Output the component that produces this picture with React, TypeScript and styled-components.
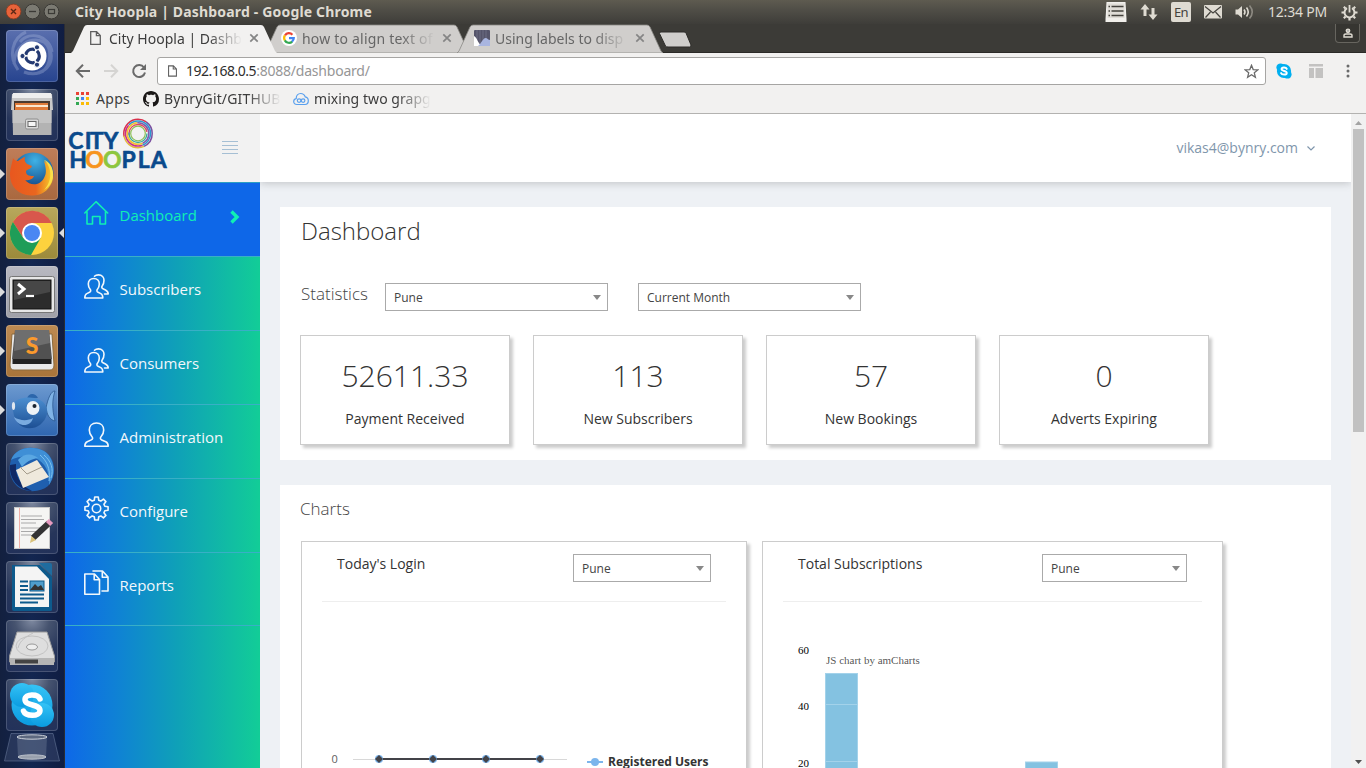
import React from "react";
import styled, { createGlobalStyle } from "styled-components";

const GlobalStyle = createGlobalStyle`
  * { box-sizing: border-box; }
  html, body { margin: 0; padding: 0; overflow: hidden; }
  body { font-family: "Open Sans", "Noto Sans", sans-serif; color: #333; }
  svg { display: block; flex: none; }
`;

const system = `"Noto Sans", "Open Sans", sans-serif`;

/* ---------- desktop shell ---------- */

const Desktop = styled.div`
  width: 1366px;
  height: 768px;
  display: flex;
  flex-direction: column;
  overflow: hidden;
`;

const MenuBar = styled.header`
  height: 24px;
  flex: none;
  display: flex;
  align-items: center;
  padding: 0 8px 0 6px;
  background: linear-gradient(#5e5b50 0%, #504e47 40%, #3e3d39 100%);
  font-family: ${system};
`;

const WindowTitle = styled.h1`
  margin: 0 auto 0 15px;
  font-size: 14px;
  line-height: 22px;
  font-weight: 700;
  letter-spacing: 0.17px;
  color: #dfdbd2;
  white-space: nowrap;
`;

const Indicators = styled.div`
  display: flex;
  align-items: center;
  gap: 13px;
`;

const Clock = styled.time`
  width: 60px;
  font-size: 14px;
  line-height: 22px;
  letter-spacing: -0.2px;
  color: #dfdbd2;
  white-space: nowrap;
`;

const LangBadge = styled.span`
  width: 20px;
  height: 20px;
  border-radius: 2px;
  background: #dfdbd2;
  color: #44423d;
  font-size: 13px;
  line-height: 21px;
  text-align: center;
  letter-spacing: -0.6px;
`;

const Workspace = styled.div`
  flex: 1;
  min-height: 0;
  display: flex;
`;

const Launcher = styled.nav`
  width: 65px;
  flex: none;
  padding: 6px 0 0 6px;
  display: flex;
  flex-direction: column;
  gap: 7px;
  border-right: 1px solid #2b2c33;
  background: linear-gradient(90deg, #13203f, #132650 50%, #101d42);
`;

const Tile = styled.div<{ $tint: string }>`
  position: relative;
  width: 52px;
  height: 52px;
  flex: none;
  border-radius: 4px;
  background: ${(p) => p.$tint};
  box-shadow: inset 0 0 0 1px rgba(255, 255, 255, 0.17);
`;

const Pip = styled.i<{ $side: "left" | "right" }>`
  position: absolute;
  top: 21px;
  ${(p) => (p.$side === "left" ? "left: -6px;" : "right: -6px;")}
  border: 5px solid transparent;
  ${(p) =>
    p.$side === "left"
      ? "border-left-color: #dcdcdc; border-right: 0;"
      : "border-right-color: #dcdcdc; border-left: 0;"}
`;

const Trash = styled.div`
  margin: -5px 0 0 -3px;
`;

/* ---------- browser ---------- */

const Browser = styled.div`
  flex: 1;
  min-width: 0;
  display: flex;
  flex-direction: column;
`;

const TabStrip = styled.div`
  height: 29px;
  flex: none;
  display: flex;
  padding: 0 6px;
  background: #3c3b37;
  box-shadow: inset 0 -1px #2b2a27;
  font-family: ${system};
`;

const TabBox = styled.div<{ $active?: boolean }>`
  position: relative;
  z-index: ${(p) => (p.$active ? 2 : 1)};
  width: 206px;
  height: 29px;
  flex: none;
  margin-right: -13px;
  padding: 0 18px 1px 17px;
  display: flex;
  align-items: center;
`;

const TabShape = styled.svg`
  position: absolute;
  left: 0;
  top: 0;
  z-index: -1;
`;

const FadeText = styled.span<{ $w: number; $ls?: number; $muted?: boolean; $solid?: boolean }>`
  width: ${(p) => p.$w}px;
  overflow: hidden;
  white-space: nowrap;
  font-family: ${system};
  font-size: 14px;
  letter-spacing: ${(p) => p.$ls ?? 0}px;
  color: ${(p) => (p.$muted ? "#666" : "#3c3c3c")};
  ${(p) => (p.$solid ? "" : "mask-image: linear-gradient(90deg, #000 calc(100% - 34px), transparent);")}
`;

const TabIcon = styled.span<{ $active?: boolean }>`
  width: 16px;
  margin-right: 5px;
  display: flex;
  justify-content: center;
`;

const TabClose = styled.span`
  margin-left: 7px;
`;

const Profile = styled.div`
  width: 25px;
  height: 19px;
  margin-left: auto;
  display: flex;
  align-items: center;
  justify-content: center;
  border: 1px solid #67655f;
  border-top: 0;
  border-radius: 0 0 4px 4px;
  background: #363531;
`;

const NewTab = styled.div`
  margin: 7px 0 0 8px;
`;

const Toolbar = styled.div`
  height: 32px;
  flex: none;
  display: flex;
  align-items: center;
  padding: 4px 16px 0 10px;
  background: #f2f1f0;
`;

const NavIcons = styled.div`
  width: 82px;
  display: flex;
  gap: 12px;
`;

const AddressBar = styled.div`
  width: 1109px;
  height: 28px;
  flex: none;
  display: flex;
  align-items: center;
  padding: 0 6px 0 10px;
  border: 1px solid #a6a5a3;
  border-radius: 3px;
  background: #fff;
  font-family: ${system};
  font-size: 14px;
  line-height: 20px;
  letter-spacing: -0.47px;
  color: #2e2e2e;
`;

const Url = styled.span`
  margin: 0 auto 0 9px;
  span { color: #969696; letter-spacing: -0.22px; }
`;

const Extensions = styled.div`
  margin-left: 9px;
  flex: 1;
  display: flex;
  align-items: center;
  gap: 16px;
  svg:last-child { margin-left: auto; }
`;

const Bookmarks = styled.div`
  height: 29px;
  flex: none;
  display: flex;
  align-items: center;
  padding: 0 0 1px 11px;
  border-bottom: 1px solid #b3b2b0;
  background: #f2f1f0;
  font-family: ${system};
`;

const Bookmark = styled.div<{ $gap: number; $after: number }>`
  display: flex;
  align-items: center;
  gap: ${(p) => p.$gap}px;
  margin-right: ${(p) => p.$after}px;
`;

const Viewport = styled.div`
  flex: 1;
  min-height: 0;
  display: flex;
`;

const ScrollTrack = styled.div`
  width: 15px;
  flex: none;
  display: flex;
  flex-direction: column;
  align-items: center;
  background: #f1f1f1;
`;

const ScrollButton = styled.div`
  height: 15px;
  display: flex;
  align-items: center;
  padding-top: 2px;
`;

const ScrollThumb = styled.div`
  width: 11px;
  height: 303px;
  margin-bottom: auto;
  background: #c1c1c1;
`;

/* ---------- app sidebar ---------- */

const Sidebar = styled.aside`
  width: 195px;
  flex: none;
  display: flex;
  flex-direction: column;
`;

const Brand = styled.div`
  height: 68px;
  flex: none;
  display: flex;
  align-items: flex-start;
  background: #f2f2f2;
`;

const Burger = styled.div`
  width: 16px;
  margin: 27px 0 0 52px;
  display: flex;
  flex-direction: column;
  gap: 3px;
  i { height: 1px; background: #a5bfd4; }
`;

const Menu = styled.ul`
  flex: 1;
  margin: 0;
  padding: 0;
  list-style: none;
  border-top: 1px solid #2b9fc4;
  background: linear-gradient(90deg, #0e68e8 0%, #0f80d6 25%, #0fa0b8 57%, #12cd97 100%);
`;

const MenuItem = styled.li<{ $active?: boolean }>`
  height: 74px;
  padding: 17px 20px 0 19px;
  display: flex;
  align-items: flex-start;
  border-bottom: 1px solid #39afc6;
  background: ${(p) => (p.$active ? "#0e67e8" : "none")};
  color: ${(p) => (p.$active ? "#10efb4" : "#f2f7fb")};
  font-size: 15px;
  line-height: 20px;
  &:last-child { height: 73px; }
`;

const MenuLabel = styled.span`
  margin: 5px auto 0 10.5px;
`;

const ChevronSlot = styled.span`
  margin-top: 10px;
`;

/* ---------- main area ---------- */

const Main = styled.main`
  flex: 1;
  min-width: 0;
  display: flex;
  flex-direction: column;
  background: #eef1f5;
`;

const TopBar = styled.div`
  height: 68px;
  flex: none;
  display: flex;
  align-items: center;
  justify-content: flex-end;
  gap: 9px;
  padding: 0 36px 2px 0;
  background: #fff;
  box-shadow: 0 1px 8px rgba(50, 50, 50, 0.25);
  clip-path: inset(0 0 -12px 0);
  color: #7f96ac;
  font-size: 14px;
  svg { margin-top: 2px; }
`;

const Panel = styled.section<{ $h: number }>`
  width: 1051px;
  height: ${(p) => p.$h}px;
  flex: none;
  margin: 25px 0 0 20px;
  padding-left: 20px;
  background: #fff;
`;

const PageTitle = styled.h2`
  margin: 0 0 0 1px;
  padding-top: 7px;
  font-size: 24px;
  line-height: 33px;
  font-weight: 300;
  color: #333;
`;

const SectionTitle = styled.h3<{ $w?: number; $top?: number }>`
  margin: 0;
  padding-top: ${(p) => p.$top ?? 0}px;
  ${(p) => (p.$w ? `width: ${p.$w}px;` : "")}
  font-size: 17px;
  line-height: 24px;
  font-weight: 300;
  color: #444;
`;

const Filters = styled.div`
  height: 28px;
  margin: 36px 0 24px 1px;
  display: flex;
  align-items: center;
  gap: 30px;
  ${SectionTitle} { margin: -7px -30px 0 0; }
`;

const SelectBox = styled.div<{ $w: number }>`
  width: ${(p) => p.$w}px;
  height: 28px;
  flex: none;
  display: flex;
  align-items: center;
  justify-content: space-between;
  padding: 0 6px 0 8px;
  border: 1px solid #aaa;
  background: #fff;
  color: #444;
  font-size: 12px;
  line-height: normal;
  &::after {
    content: "";
    border: 4px solid transparent;
    border-top: 5px solid #888;
    border-bottom: 0;
  }
`;

const Stats = styled.div`
  display: flex;
  gap: 23px;
`;

const StatCard = styled.div`
  width: 210px;
  height: 110px;
  display: flex;
  flex-direction: column;
  align-items: center;
  border: 1px solid #ccc;
  box-shadow: 3px 3px 3px #ccc;
  background: #fff;
`;

const StatValue = styled.div`
  margin-top: 19px;
  font-size: 30px;
  line-height: 41px;
  font-weight: 300;
  color: #333;
`;

const StatLabel = styled.div`
  margin-top: 13px;
  font-size: 14px;
  line-height: 20px;
  color: #333;
`;

const Charts = styled.div`
  margin: 20px 0 0 1px;
  display: flex;
  gap: 15px;
`;

const ChartCard = styled.div<{ $w: number }>`
  width: ${(p) => p.$w}px;
  height: 330px;
  padding: 0 20px;
  border: 1px solid #ccc;
  box-shadow: 3px 3px 3px #ccc;
  background: #fff;
`;

const ChartHead = styled.div`
  height: 60px;
  padding: 12px 15px 0 15px;
  display: flex;
  align-items: flex-start;
  justify-content: space-between;
  border-bottom: 1px solid #eee;
  font-size: 14px;
  line-height: 20px;
  color: #333;
`;

/* ---------- drawings ---------- */

const PageIcon = ({ w = 11, h = 14 }: { w?: number; h?: number }) => (
  <svg width={w} height={h} viewBox="0 0 11 14" fill="none" stroke="#5f5f5f" strokeWidth="1.3">
    <path d="M.7.7H6.6L10.3 4.4V13.3H.7ZM6.4.9V4.6H10.1" />
  </svg>
);

const GoogleIcon = () => (
  <svg width="16" height="16" viewBox="0 0 16 16" fill="none" strokeWidth="2.2">
    <circle cx="8" cy="8" r="8" fill="#fff" />
    <path d="M4 5.3A4.7 4.7 0 0 1 11.4 4.7" stroke="#ea4335" />
    <path d="M3.9 10.5A4.8 4.8 0 0 1 3.9 5.4" stroke="#fbbc05" />
    <path d="M11.2 11.6A4.8 4.8 0 0 1 3.8 10.4" stroke="#34a853" />
    <path d="M8 8.1H12.8A4.7 4.7 0 0 1 11 11.7" stroke="#4285f4" />
  </svg>
);

const ChartFavicon = () => (
  <svg width="16" height="16" viewBox="0 0 16 16">
    <rect width="16" height="16" rx="1" fill="#55546a" />
    <path d="M3 0V16M6 0V16M9 0V16M12 0V16" stroke="#6d6c82" />
    <path d="M0 6C3 7 4 14 8 16H0Z" fill="#fff" />
    <path d="M4 16C7 14 9 8 11.5 8C13.5 8 14 10 16 10V16Z" fill="#a9b5e0" />
  </svg>
);

const Cross = () => (
  <svg width="10" height="10" viewBox="0 0 10 10" stroke="#858585" strokeWidth="1.7">
    <path d="M1.3 1.3L8.7 8.7M8.7 1.3L1.3 8.7" />
  </svg>
);

const Arrow = ({ color, flip }: { color: string; flip?: boolean }) => (
  <svg width="16" height="16" viewBox="0 0 16 16" fill="none" stroke={color} strokeWidth="2">
    <path d={flip ? "M1 8H14M8 1.8L14.2 8L8 14.2" : "M15 8H2M8 1.8L1.8 8L8 14.2"} />
  </svg>
);

const Reload = () => (
  <svg width="16" height="16" viewBox="0 0 16 16">
    <path d="M13 4.5A6 6 0 1 0 14 9.5" fill="none" stroke="#6a6a6a" strokeWidth="2" />
    <path d="M15 1V7H9Z" fill="#6a6a6a" />
  </svg>
);

const Github = () => (
  <svg width="16" height="16" viewBox="0 0 16 16" fill="#1b1817">
    <path d="M8 0C3.580 0 0 3.580 0 8c0 3.540 2.290 6.530 5.470 7.590.4.070.550-.170.550-.380 0-.190-.010-.820-.010-1.490-2.010.370-2.530-.490-2.690-.940-.090-.230-.480-.940-.820-1.130-.280-.150-.680-.520-.010-.530.630-.010 1.080.580 1.230.820.720 1.210 1.870.870 2.330.660.070-.520.280-.870.510-1.070-1.780-.2-3.640-.890-3.640-3.950 0-.870.310-1.590.820-2.150-.080-.2-.360-1.020.080-2.120 0 0 .670-.210 2.200.820.640-.180 1.320-.270 2-.270s1.360.090 2 .270c1.530-1.040 2.200-.820 2.200-.820.440 1.100.160 1.920.080 2.120.510.560.820 1.270.820 2.150 0 3.070-1.870 3.750-3.650 3.950.290.250.540.730.540 1.480 0 1.070-.010 1.930-.010 2.200 0 .210.150.460.550.380A8.010 8.010 0 0 0 16 8c0-4.420-3.580-8-8-8Z" />
  </svg>
);

const CloudMark = () => (
  <svg width="16" height="14" viewBox="0 0 16 14" fill="none" stroke="#5aa0ee" strokeWidth="1.2">
    <path d="M4 12.500C1.700 12.500.700 11 .700 9.500C.700 8 1.800 6.800 3.200 6.600C3.200 3.500 5 1.500 7.700 1.500C10 1.500 11.500 2.800 12.200 4.800C14.200 5.200 15.300 6.700 15.300 8.800C15.300 11 14 12.500 12 12.500Z" />
    <circle cx="6.1" cy="8.6" r="1.8" />
    <circle cx="10.1" cy="8.6" r="1.8" />
  </svg>
);

const appsColors = ["#ea4335", "#ea4335", "#ea4335", "#34a853", "#4285f4", "#fbbc05", "#34a853", "#fbbc05", "#fbbc05"];
const AppsGrid = () => (
  <svg width="13" height="13" viewBox="0 0 13 13">
    {appsColors.map((c, i) => (
      <rect key={i} x={(i % 3) * 5} y={Math.floor(i / 3) * 5} width="3" height="3" fill={c} />
    ))}
  </svg>
);

const SkypeBlob = ({ size, light }: { size: number; light?: boolean }) => (
  <svg width={size} height={size} viewBox="0 0 52 52">
    <defs>
      <linearGradient id="sky" x2="0" y2="1">
        <stop stopColor="#35c3f6" />
        <stop offset="1" stopColor="#0a9be0" />
      </linearGradient>
    </defs>
    <g fill={light ? "#00aff0" : "url(#sky)"}>
      <circle cx="26" cy="26" r="20.5" />
      <circle cx="16" cy="16" r="12" />
      <circle cx="36" cy="36" r="12" />
      <path
        d="M34 20C32 14.500 19 14.500 19 20.500C19 27.500 34 24.500 34 31.500C34 38 19.500 37.500 17.500 32"
        fill="none"
        stroke="#fff"
        strokeWidth="5.5"
        strokeLinecap="round"
      />
    </g>
  </svg>
);

const WindowButtons = () => (
  <svg width="54" height="18" viewBox="0 0 54 18" fill="none">
    <circle cx="7.5" cy="8.5" r="7.4" fill="#e8633a" stroke="#8f3b20" strokeWidth=".8" />
    <path d="M5 6L10 11M10 6L5 11" stroke="#5c2815" strokeWidth="1.4" />
    <circle cx="26.5" cy="8.500" r="7.4" fill="#7b7a72" stroke="#3a3935" />
    <path d="M23 8.500H30" stroke="#3b3a36" strokeWidth="1.3" />
    <circle cx="45.5" cy="8.5" r="7.4" fill="#7b7a72" stroke="#3a3935" />
    <rect x="42.5" y="6.5" width="6" height="4" stroke="#3b3a36" strokeWidth="1.2" />
  </svg>
);

const ListIndicator = () => (
  <svg width="22" height="20" viewBox="0 0 22 20">
    <path d="M1.5 0H20.5L21.5 17V20H.5V17Z" fill="#f1efeb" />
    <path d="M2.5 1.5H19.5V16H2.5Z" fill="#dfdcd6" />
    <path d="M6.500 4.500H18.500M6.500 9H18.500M6.500 13.500H18.500" stroke="#44423d" strokeWidth="1.3" />
    <path d="M3.500 4.500H5M3.500 9H5M3.500 13.500H5" stroke="#44423d" strokeWidth="1.3" />
  </svg>
);

const NetworkIndicator = () => (
  <svg width="18" height="18" viewBox="0 0 18 18" fill="#dfdbd2">
    <path d="M5 1L9.500 6.500H6.500V13H3.500V6.500H.500ZM13 17L8.500 11.500H11.500V5H14.500V11.500H17.500Z" />
  </svg>
);

const MailIndicator = () => (
  <svg width="18" height="14" viewBox="0 0 18 14">
    <rect width="18" height="13.5" rx="1" fill="#dfdbd2" />
    <path d="M1 1.500L9 8L17 1.500M1.500 12.500L6.500 7M16.500 12.500L11.500 7" fill="none" stroke="#44423d" strokeWidth="1.2" />
  </svg>
);

const VolumeIndicator = () => (
  <svg width="20" height="16" viewBox="0 0 20 16" fill="none">
    <path d="M.5 5.500H3L7 2V14L3 10.500H.5Z" fill="#dfdbd2" />
    <path d="M9 5.500Q11 8 9 10.500M11.500 3.500Q15 8 11.500 12.500" stroke="#dfdbd2" strokeWidth="1.6" />
    <path d="M14.500 1.500Q20 8 14.500 14.500" stroke="#8d8a82" strokeWidth="1.6" />
  </svg>
);

const PowerGear = () => (
  <svg width="17" height="17" viewBox="0 0 17 17" fill="none" stroke="#dfdbd2">
    <path d="M6 4.100A5 5 0 1 0 11 4.100" strokeWidth="2" />
    <path d="M8.500 1V8.500" strokeWidth="1.8" />
    <path d="M.5 8.500H3M14 8.500H16.500M8.500 14V16.500M2.800 2.800L4.500 4.500M14.200 2.800L12.500 4.500M2.800 14.200L4.500 12.500M14.200 14.200L12.500 12.500" strokeWidth="2.2" />
  </svg>
);

const rings: [number, string, number, string, number][] = [
  [14.2, "#d9304a", 1.5, "34 55.2", 48],
  [14.2, "#7a4fa0", 1.5, "30 59.2", 14],
  [14.2, "#e2b93a", 1.5, "26 63.2", -16],
  [12.5, "#2f97cf", 1.6, "45 33.5", 30],
  [12.5, "#c9308c", 1.6, "33 45.5", -15],
  [10.8, "#f2c230", 1.6, "38 29.9", -12],
  [10.8, "#7f5cb0", 1.6, "30 37.9", 18],
  [9, "#e0485c", 1.3, "28 28.5", 30],
  [9, "#35aa9c", 1.3, "29 27.5", 0],
  [7.3, "#8cc05a", 1.2, "none", 0],
];

const Logo = () => (
  <svg width="105" height="60" viewBox="0 0 105 60">
    <g fill="none">
      {rings.map(([r, stroke, w, dash, off], i) => (
        <circle key={i} cx="73" cy="19.5" r={r} stroke={stroke} strokeWidth={w} strokeDasharray={dash} strokeDashoffset={off} />
      ))}
    </g>
    <g fontFamily="Lato, sans-serif" fontWeight="700" fontSize="23" fill="#0a4a8c" stroke="#0a4a8c" strokeWidth=".6" strokeLinejoin="round">
      <text y="34.7" x="3.3 19.8 24.8 38.6">CITY</text>
      <text y="54.2" x="4.3 20.2 38 56.5 72.8 85.7">
        H<tspan fill="#f7941d" stroke="#f7941d">O</tspan><tspan fill="#8dc63f" stroke="#8dc63f">O</tspan>PLA
      </text>
    </g>
  </svg>
);

const LineIcon = styled.svg.attrs({ width: 25, height: 26, viewBox: "0 0 25 26" })`
  fill: none;
  stroke: currentColor;
  stroke-width: 1.6;
  stroke-linejoin: round;
  stroke-linecap: round;
`;

const HomeIcon = () => (
  <LineIcon>
    <path d="M.8 13L12 1.700L23.700 13M3 11.500V24H8.500V16.500H16V24H21.500V11.500" />
  </LineIcon>
);
const UsersIcon = () => (
  <LineIcon>
    <path d="M9.800 4.500C6.300 4.500 4.300 7 4.300 10C4.300 12.800 5.300 14.300 6.300 15.500C7 16.600 6.800 17.700 5.500 18.300L2.800 19.600C1.200 20.400.800 21.400.800 24H18.800C18.800 21.400 18.400 20.400 16.800 19.600L14.100 18.300C12.800 17.700 12.600 16.600 13.300 15.500C14.300 14.300 15.300 12.800 15.300 10C15.300 7 13.300 4.500 9.800 4.500Z" />
    <path d="M10.500 2.200C11.500 1.200 13 .900 14.500.900C18 .900 20 3.300 20 6.300C20 9.200 19.200 10.700 18.200 12C17.500 13 17.700 14.200 19 14.800L21.500 16C23.500 17 24.200 18 24.200 20H20.500" />
  </LineIcon>
);
const UserIcon = () => (
  <LineIcon>
    <path d="M12.500 1C8 1 5.300 4 5.300 8C5.300 11.500 6.500 13.200 8 14.800C9 16 8.800 17.200 7.300 17.900L3.200 19.800C1.300 20.700.800 21.600.800 24.200H24.200C24.200 21.600 23.700 20.700 21.800 19.800L17.700 17.900C16.200 17.200 16 16 17 14.800C18.500 13.200 19.700 11.500 19.700 8C19.700 4 17 1 12.500 1Z" />
  </LineIcon>
);
const gearPath = (() => {
  const pts: string[] = [];
  for (let i = 0; i < 8; i++) {
    const mid = (i * Math.PI) / 4;
    [[-0.26, 8.6], [-0.15, 11.7], [0.15, 11.7], [0.26, 8.6]].forEach(([da, r]) => {
      pts.push(`${(12.5 + r * Math.sin(mid + da)).toFixed(2)} ${(12.5 - r * Math.cos(mid + da)).toFixed(2)}`);
    });
  }
  return `M${pts.join("L")}Z`;
})();
const GearIcon = () => (
  <LineIcon>
    <path d={gearPath} />
    <circle cx="12.5" cy="12.5" r="4.2" />
  </LineIcon>
);
const DocsIcon = () => (
  <LineIcon>
    <path d="M.8 4H10.500L15.500 9.500V24.300H.8ZM10.200 4.200V9.800H15.300" />
    <path d="M9 1H18.500L24 7V21H18M18.300 1.200V7.200H23.800" />
  </LineIcon>
);
const ActiveChevron = () => (
  <svg width="10" height="14" viewBox="0 0 10 14" fill="none" stroke="currentColor" strokeWidth="3.4">
    <path d="M1.500 1.500L7 7L1.500 12.500" />
  </svg>
);

/* launcher artwork, each on a 52px grid */
const Art = styled.svg.attrs({ width: 52, height: 52, viewBox: "0 0 52 52" })``;

const UbuntuArt = () => (
  <Art fill="none">
    <path d="M8 34C8 16 24 6 38 12C46 18 46 34 36 42M44 20C50 36 34 48 18 42M20 2C6 8 2 26 12 40M14 12C24 0 44 6 46 22" stroke="#a9b7dc" strokeOpacity=".35" strokeWidth="3" />
    <circle cx="26" cy="26" r="14.5" fill="#fff" />
    <circle cx="26.5" cy="26" r="6.8" stroke="#243a72" strokeWidth="3.2" strokeDasharray="12.2 2" strokeDashoffset="6" />
    <g fill="#243a72" stroke="#fff">
      <circle cx="16.5" cy="26" r="2.6" />
      <circle cx="31" cy="17.3" r="2.6" />
      <circle cx="31" cy="34.7" r="2.6" />
    </g>
  </Art>
);
const FilesArt = () => (
  <Art>
    <path d="M6 5H46L47 21H5Z" fill="#c9c9c9" />
    <path d="M7 4H45L46 9H6Z" fill="#eee" />
    <rect x="8" y="12" width="36" height="10" fill="#4b3a30" />
    <path d="M9 14H42V21H9Z" fill="#e07b3a" />
    <path d="M10 17H42" stroke="#fbe6cf" strokeWidth="2" />
    <path d="M6.500 21H45.500V46H7Z" fill="#b3b3b3" />
    <path d="M6.500 21H45.500V34H6.500Z" fill="#c4c4c4" />
    <rect x="19.5" y="30" width="13" height="10" rx="1.5" fill="#d9d9d9" stroke="#8e8e8e" />
    <rect x="22" y="32.5" width="8" height="5" fill="#f5f5f5" stroke="#666" />
  </Art>
);
const FirefoxArt = () => (
  <Art>
    <defs>
      <radialGradient id="ffb" cx=".55" cy=".2" r=".7">
        <stop stopColor="#3fb2e6" />
        <stop offset="1" stopColor="#12407f" />
      </radialGradient>
      <linearGradient id="ffo" x1="0" x2="1">
        <stop stopColor="#e8571f" />
        <stop offset=".6" stopColor="#e9661f" />
        <stop offset="1" stopColor="#f8d02c" />
      </linearGradient>
    </defs>
    <circle cx="27" cy="25" r="20.5" fill="url(#ffb)" />
    <path d="M7 10C8 12 10 13 12 13C15 11 18 9 19 9C18 12 19 14 21 16L26 18C25 21 22 21 20 23C20 27 22 28 28 28C27 32 20 33 19 32C24 38 34 38 38 30C41 25 40 20 38 13C46 18 49 26 46 34C42 44 34 48 25 47.500C12 47 4 38 4 27C4 20 6 16 7 10Z" fill="url(#ffo)" />
    <path d="M38 12C47 20 46 34 38 42C46 38 49 28 46 20C45 17 42 13 38 12Z" fill="#fbe04a" />
  </Art>
);
const ChromeArt = () => (
  <Art>
    <circle cx="26" cy="26" r="22" fill="#fdd23e" />
    <path d="M17.300 21L26 16H45.800A22 22 0 0 0 6.900 15L17.300 31Z" fill="#d8574c" />
    <path d="M6.900 15L17.300 31L26 36L34.700 31L25 48A22 22 0 0 1 6.900 15Z" fill="#1f9d58" />
    <circle cx="26" cy="26" r="10" fill="#fff" />
    <circle cx="26" cy="26" r="8" fill="#4a87f3" />
  </Art>
);
const TerminalArt = () => (
  <Art fill="none">
    <rect x="3.5" y="10.5" width="45" height="36" rx="2" fill="#e7e7e7" stroke="#777" />
    <rect x="7" y="14" width="38" height="29" fill="#2c2c2c" stroke="#111" />
    <path d="M8 15H44V26L8 34Z" fill="#474747" />
    <path d="M12 18L18 23L12 28" stroke="#fff" strokeWidth="3" />
    <path d="M20 30H28" stroke="#fff" strokeWidth="2.2" />
  </Art>
);
const SublimeArt = () => (
  <Art>
    <path d="M6 9L4 40Q4 45 8 45H44Q48 45 48 40L46 9Z" fill="#e9e9e9" stroke="#8b6a3d" />
    <path d="M6.500 34H45.500V39H6.500Z" fill="#222" />
    <path d="M9 5H43L46 34H6Z" fill="#515151" />
    <path d="M9 5H43L44 18L8 26Z" fill="#6e6e6e" />
    <text x="26" y="28.5" textAnchor="middle" fontFamily="Lato, sans-serif" fontWeight="900" fontSize="23" fill="#fb9a2c">S</text>
  </Art>
);
const FishArt = () => (
  <Art>
    <defs>
      <linearGradient id="fish" x2="0" y2="1">
        <stop stopColor="#4b8ed0" />
        <stop offset="1" stopColor="#1d4f94" />
      </linearGradient>
    </defs>
    <path d="M40 24C42 14 45 7 49 7C46 16 46 25 49 37C44 36 41 31 40 24Z" fill="#7fb3e6" stroke="#234f86" strokeWidth=".7" />
    <path d="M21 15C22 9 29 8 32 14Z" fill="#2c66ab" />
    <path d="M7 20C10 14 24 11 34 16C40 19 42 25 41 30C38 42 26 47 17 43C10 40 6 30 7 20Z" fill="url(#fish)" />
    <path d="M8 33C14 37 22 37 27 34C25 43 12 44 8 33Z" fill="#7aabe0" />
    <ellipse cx="27" cy="24" rx="6.5" ry="7" fill="#eef2f6" />
    <circle cx="28.500" cy="22" r="2" fill="#1a2430" />
    <ellipse cx="7.500" cy="22" rx="1.600" ry="4" fill="#dfe6ee" />
  </Art>
);
const ThunderbirdArt = () => (
  <Art>
    <path d="M5 17C10 4 26 2 38 8C49 14 52 32 42 43C34 50 18 50 10 42C4 36 2 26 5 17Z" fill="#1f5fae" />
    <path d="M5 17C10 4 26 2 38 8C48 14 51 30 43 42C44 30 40 20 28 14C20 12 10 14 5 17Z" fill="#3f8fd6" />
    <path d="M34 12C40 17 45 25 43 38M38 12C45 18 48 26 45 35" stroke="#7cc0ee" strokeWidth="1" fill="none" />
    <path d="M4 22C3 36 12 47 26 48C14 42 9 33 10 21Z" fill="#102a66" />
    <path d="M10 27L31 17L43 34L17 45Z" fill="#efe9dc" />
    <path d="M14 24L21 31L36 24" fill="none" stroke="#a39b8b" />
    <path d="M12 17C18 10 26 10 32 15C25 16 20 19 16 24Z" fill="#5aa7e2" />
  </Art>
);
const GeditArt = () => (
  <Art fill="none">
    <rect x="8.500" y="5.500" width="35" height="41" fill="#f5f5f3" stroke="#c8c8c8" />
    <path d="M13.500 6V46" stroke="#f0b0a8" />
    <path d="M15 14H36M15 17.500H38M15 21H30M15 26H37M15 29.500H30M15 33H25" stroke="#a9a9a9" strokeWidth="1.2" />
    <path d="M27 36L43 21" stroke="#333" strokeWidth="6" />
    <path d="M42 22L45 19" stroke="#e79ac0" strokeWidth="6" />
    <path d="M24 41L25.500 34L30 38Z" fill="#d9c27a" />
  </Art>
);
const WriterArt = () => (
  <Art>
    <path d="M6 4H34L46 16V49Q46 50 44 50H8Q6 50 6 48Z" fill="#0d5a8c" />
    <path d="M33 2H44Q46 2 46 4V15Z" fill="#1f6c9f" />
    <path d="M9 5.500H31L43 18V46H9Z" fill="#f4f4f4" />
    <path d="M14 20.500H22M14 25H22M14 29H22M14 33.500H38M14 37.500H38M14 41.500H32" stroke="#0d5a8c" strokeWidth="1.8" />
    <rect x="24" y="20" width="14" height="10" fill="#4f9dcb" stroke="#0d5a8c" />
    <path d="M24 29L29 23L32 26L35 24L38 29Z" fill="#333" />
  </Art>
);
const DiskArt = () => (
  <Art fill="none">
    <path d="M11 12H41L48.500 36V42H3.500V36Z" fill="#dedede" stroke="#9a9a9a" />
    <path d="M4 38H48V45H4Z" fill="#b5b5b5" />
    <path d="M9 39.500H32V43.500H9Z" fill="#444" />
    <ellipse cx="26" cy="26" rx="16" ry="10" stroke="#c2c2c2" />
    <ellipse cx="26" cy="27" rx="5.500" ry="3" fill="#eee" stroke="#9a9a9a" />
    <path d="M27 13C20 17 14 20 12 28" stroke="#c2c2c2" />
  </Art>
);
const TrashArt = () => (
  <svg width="58" height="30" viewBox="0 0 58 30" fill="none">
    <path d="M8 .5H50L56.500 28H1.500Z" fill="#4d5d80" fillOpacity=".35" stroke="#7484a6" strokeOpacity=".5" />
    <path d="M14 4H44L43 24H15Z" fill="#8c97ad" fillOpacity=".3" />
    <ellipse cx="29" cy="4" rx="15" ry="2.2" fill="#5d6980" stroke="#cdd2da" />
    <ellipse cx="29" cy="24" rx="14" ry="2.2" fill="#98a0ad" stroke="#bcc2cc" />
  </svg>
);

/* ---------- data ---------- */

const glass = "radial-gradient(circle at 50% 0, #7f8aa1 0%, #46536f 30%, #26355a 65%, #22315a 100%)";

const launcherApps = [
  { key: "dash", tint: "linear-gradient(#5a6fae, #27448f)", art: <UbuntuArt /> },
  { key: "files", tint: glass, art: <FilesArt /> },
  { key: "firefox", tint: "linear-gradient(#bf7d59, #a9683f)", art: <FirefoxArt />, left: true },
  { key: "chrome", tint: "linear-gradient(#b8a85c, #9c8a3a)", art: <ChromeArt />, left: true, right: true },
  { key: "terminal", tint: "linear-gradient(#b9b9c1, #9fa0a8)", art: <TerminalArt />, left: true },
  { key: "sublime", tint: "linear-gradient(#bd8a52, #a9743a)", art: <SublimeArt />, left: true },
  { key: "bluefish", tint: "linear-gradient(#6d9ad0, #2f66b0)", art: <FishArt />, left: true },
  { key: "mail", tint: glass, art: <ThunderbirdArt /> },
  { key: "editor", tint: glass, art: <GeditArt /> },
  { key: "writer", tint: glass, art: <WriterArt /> },
  { key: "disk", tint: glass, art: <DiskArt /> },
  { key: "skype", tint: glass, art: <SkypeBlob size={52} /> },
];

const menu = [
  { label: "Dashboard", icon: <HomeIcon />, active: true },
  { label: "Subscribers", icon: <UsersIcon /> },
  { label: "Consumers", icon: <UsersIcon /> },
  { label: "Administration", icon: <UserIcon /> },
  { label: "Configure", icon: <GearIcon /> },
  { label: "Reports", icon: <DocsIcon /> },
];

const stats = [
  ["52611.33", "Payment Received"],
  ["113", "New Subscribers"],
  ["57", "New Bookings"],
  ["0", "Adverts Expiring"],
];

const tabs = [
  { title: "City Hoopla | Dashb", icon: <PageIcon />, active: true, ls: 0.02 },
  { title: "how to align text of", icon: <GoogleIcon />, ls: 0.2 },
  { title: "Using labels to disp", icon: <ChartFavicon />, ls: 0 },
];

const Tab = ({ title, icon, active, ls }: (typeof tabs)[number]) => (
  <TabBox $active={active}>
    <TabShape width="206" height="29" viewBox="0 0 206 29">
      <path
        d="M0 29L2 27L13 3Q14 1 16 1H190Q192 1 193 3L204 27L206 29Z"
        fill={active ? "#f2f1f0" : "#d0cecc"}
        stroke={active ? "none" : "#8b8a87"}
        strokeWidth=".8"
      />
    </TabShape>
    <TabIcon>{icon}</TabIcon>
    <FadeText $w={134} $ls={ls} $muted={!active}>{title}</FadeText>
    <TabClose><Cross /></TabClose>
  </TabBox>
);

const points = [57, 111, 164, 218];

const LoginChart = () => (
  <svg width="404" height="200" viewBox="0 0 404 200" fontFamily="Open Sans, sans-serif">
    <text x="9.500" y="161" fontSize="11" fill="#606060">0</text>
    <path d="M31 157.500H245" stroke="#d8d8d8" />
    <path d="M57 157H218" stroke="#434348" strokeWidth="2" />
    {points.map((x) => (
      <g key={x}>
        <circle cx={x} cy="157" r="4" fill="#7cb5ec" />
        <path d={`M${x - 4} 157L${x} 153L${x + 4} 157L${x} 161Z`} fill="#434348" />
      </g>
    ))}
    <path d="M265 160H281" stroke="#7cb5ec" strokeWidth="2" />
    <circle cx="273" cy="160" r="4" fill="#7cb5ec" />
    <text x="286" y="164" fontSize="12" fontWeight="700" fill="#333">Registered Users</text>
  </svg>
);

const SubscriptionChart = () => (
  <svg width="419" height="200" viewBox="0 0 419 200" fontFamily="Liberation Serif, serif" fontSize="11">
    <text x="15" y="52">60</text>
    <text x="15" y="108">40</text>
    <text x="15" y="165">20</text>
    <text x="43" y="62" fillOpacity=".7">JS chart by amCharts</text>
    <g fill="#84c2e1" stroke="#a3d2ea">
      <rect x="42.500" y="71.500" width="32" height="200" />
      <rect x="242.500" y="160" width="32" height="200" />
      <path d="M42 102.500H75M42 159.500H75" />
    </g>
  </svg>
);

/* ---------- page ---------- */

export default function App() {
  return (
    <Desktop>
      <GlobalStyle />
      <MenuBar>
        <WindowButtons />
        <WindowTitle>City Hoopla | Dashboard - Google Chrome</WindowTitle>
        <Indicators>
          <ListIndicator />
          <NetworkIndicator />
          <LangBadge>En</LangBadge>
          <MailIndicator />
          <VolumeIndicator />
          <Clock>12:34 PM</Clock>
          <PowerGear />
        </Indicators>
      </MenuBar>
      <Workspace>
        <Launcher>
          {launcherApps.map((a) => (
            <Tile key={a.key} $tint={a.tint}>
              {a.art}
              {a.left && <Pip $side="left" />}
              {a.right && <Pip $side="right" />}
            </Tile>
          ))}
          <Trash><TrashArt /></Trash>
        </Launcher>
        <Browser>
          <TabStrip>
            {tabs.map((t) => <Tab key={t.title} {...t} />)}
            <NewTab>
              <svg width="34" height="17" viewBox="0 0 34 17">
                <path d="M3 1H26Q27.500 1 28 2L33 14Q33 16 31.500 16H10Q8 16 7.500 15L1.500 2.500Q1 1 3 1Z" fill="#d0cecc" stroke="#2c2b28" />
              </svg>
            </NewTab>
            <Profile>
              <svg width="10" height="10" viewBox="0 0 10 10" fill="none" stroke="#dfdbd2" strokeWidth="1.4">
                <circle cx="5" cy="2.8" r="1.7" fill="#aaa" />
                <path d="M1 9V7.500Q1 6 3 6H7Q9 6 9 7.500V9Z" />
              </svg>
            </Profile>
          </TabStrip>
          <Toolbar>
            <NavIcons>
              <Arrow color="#6a6a6a" />
              <Arrow color="#d5d4d2" flip />
              <Reload />
            </NavIcons>
            <AddressBar>
              <PageIcon w={9} h={12} />
              <Url>192.168.0.5<span>:8088/dashboard/</span></Url>
              <svg width="15" height="15" viewBox="0 0 15 15" fill="none" stroke="#6a6a6a" strokeWidth="1.3">
                <path d="M7.500 1.300L9.200 5.600L13.800 5.900L10.300 8.800L11.400 13.300L7.500 10.800L3.600 13.300L4.700 8.800L1.200 5.900L5.800 5.600Z" />
              </svg>
            </AddressBar>
            <Extensions>
              <SkypeBlob size={18} light />
              <svg width="14" height="14" viewBox="0 0 14 14" fill="#c3c2c1">
                <path d="M0 0H14V2.500H0ZM0 4H5V14H0ZM6.500 4H14V14H6.500Z" />
              </svg>
              <svg width="4" height="14" viewBox="0 0 4 14" fill="#6a6a6a">
                <circle cx="2" cy="2" r="1.5" />
                <circle cx="2" cy="7" r="1.5" />
                <circle cx="2" cy="12" r="1.5" />
              </svg>
            </Extensions>
          </Toolbar>
          <Bookmarks>
            <Bookmark $gap={7} $after={12}>
              <AppsGrid />
              <FadeText $w={35} $ls={0.3} $solid>Apps</FadeText>
            </Bookmark>
            <Bookmark $gap={5} $after={12}>
              <Github />
              <FadeText $w={117} $ls={0.15}>BynryGit/GITHUB</FadeText>
            </Bookmark>
            <Bookmark $gap={5} $after={0}>
              <CloudMark />
              <FadeText $w={117} $ls={0.05}>mixing two grapg</FadeText>
            </Bookmark>
          </Bookmarks>
          <Viewport>
            <Sidebar>
              <Brand>
                <Logo />
                <Burger><i /><i /><i /><i /></Burger>
              </Brand>
              <Menu>
                {menu.map((m) => (
                  <MenuItem key={m.label} $active={m.active}>
                    {m.icon}
                    <MenuLabel>{m.label}</MenuLabel>
                    {m.active && <ChevronSlot><ActiveChevron /></ChevronSlot>}
                  </MenuItem>
                ))}
              </Menu>
            </Sidebar>
            <Main>
              <TopBar>
                vikas4@bynry.com
                <svg width="8" height="5" viewBox="0 0 8 5" fill="none" stroke="#7f96ac" strokeWidth="1.2">
                  <path d="M.5.5L4 4L7.500.5" />
                </svg>
              </TopBar>
              <Panel $h={253}>
                <PageTitle>Dashboard</PageTitle>
                <Filters>
                  <SectionTitle $w={84}>Statistics</SectionTitle>
                  <SelectBox $w={223}>Pune</SelectBox>
                  <SelectBox $w={223}>Current Month</SelectBox>
                </Filters>
                <Stats>
                  {stats.map(([value, label]) => (
                    <StatCard key={label}>
                      <StatValue>{value}</StatValue>
                      <StatLabel>{label}</StatLabel>
                    </StatCard>
                  ))}
                </Stats>
              </Panel>
              <Panel $h={400}>
                <SectionTitle $top={12}>Charts</SectionTitle>
                <Charts>
                  <ChartCard $w={446}>
                    <ChartHead>Today's Login<SelectBox $w={138}>Pune</SelectBox></ChartHead>
                    <LoginChart />
                  </ChartCard>
                  <ChartCard $w={461}>
                    <ChartHead>Total Subscriptions<SelectBox $w={145}>Pune</SelectBox></ChartHead>
                    <SubscriptionChart />
                  </ChartCard>
                </Charts>
              </Panel>
            </Main>
            <ScrollTrack>
              <ScrollButton>
                <svg width="7" height="4" viewBox="0 0 7 4" fill="#a3a3a3"><path d="M0 4L3.500 0L7 4Z" /></svg>
              </ScrollButton>
              <ScrollThumb />
              <ScrollButton>
                <svg width="7" height="4" viewBox="0 0 7 4" fill="#505050"><path d="M0 0L3.500 4L7 0Z" /></svg>
              </ScrollButton>
            </ScrollTrack>
          </Viewport>
        </Browser>
      </Workspace>
    </Desktop>
  );
}
